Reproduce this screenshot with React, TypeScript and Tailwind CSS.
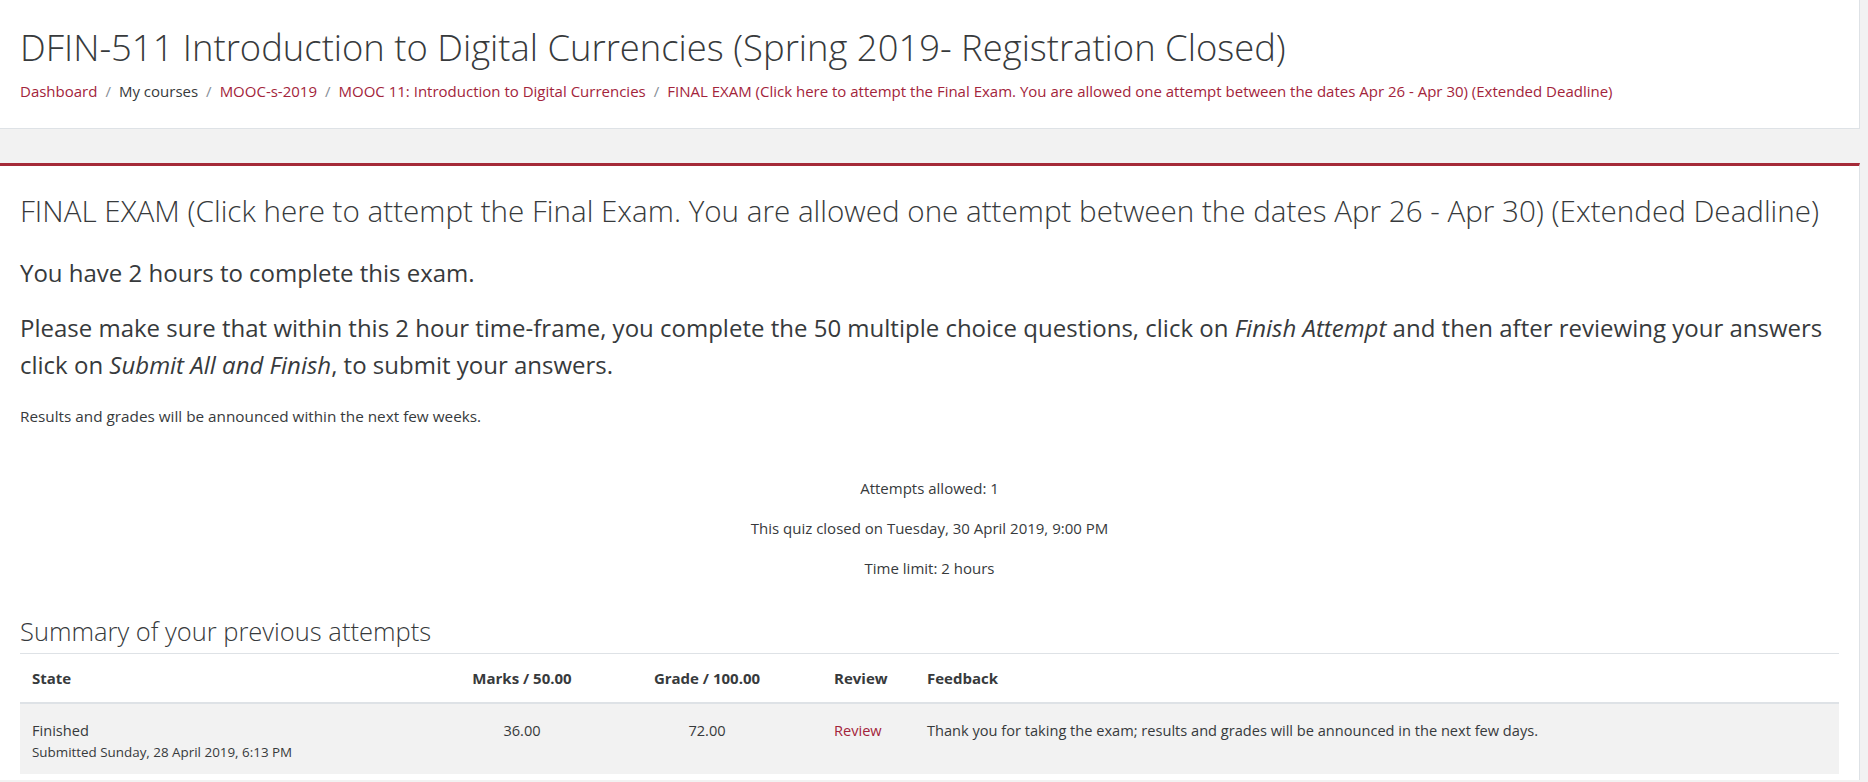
import React from "react";

const crumbs = [
  { label: "Dashboard", link: true },
  { label: "My courses", link: false },
  { label: "MOOC-s-2019", link: true },
  { label: "MOOC 11: Introduction to Digital Currencies", link: true },
  {
    label:
      "FINAL EXAM (Click here to attempt the Final Exam. You are allowed one attempt between the dates Apr 26 - Apr 30) (Extended Deadline)",
    link: true,
  },
];

export default function App() {
  return (
    <div className="min-h-screen bg-[#f2f2f2] font-['Open_Sans',sans-serif] text-[#373a3c]">
      {/* Page header */}
      <div className="w-[1860px] h-[129px] bg-white border-r border-b border-[#dee2e6] px-[20px] pt-[25px]">
        <h1 className="text-[36.4px] font-light leading-[44px] whitespace-nowrap">
          DFIN-511 Introduction to Digital Currencies (Spring 2019- Registration Closed)
        </h1>
        <nav className="mt-[11px] flex items-center text-[15px] leading-[22px] whitespace-nowrap">
          {crumbs.map((c, i) => (
            <React.Fragment key={i}>
              {i > 0 && <span className="px-[8px] text-[#868e96]">/</span>}
              <span className={c.link ? "text-[#a3243b]" : "text-[#373a3c]"}>{c.label}</span>
            </React.Fragment>
          ))}
        </nav>
      </div>

      {/* Main region */}
      <div className="mt-[34px] w-[1860px] bg-white border-t-[3px] border-t-[#a52a38] border-r border-r-[#dee2e6] px-[20px] pt-[28px] pb-[6px]">
        <h2 className="text-[29.6px] font-light leading-[34px] whitespace-nowrap">
          FINAL EXAM (Click here to attempt the Final Exam. You are allowed one attempt between the dates Apr 26 - Apr 30) (Extended Deadline)
        </h2>

        <p className="mt-[29px] text-[24px] leading-[32px] whitespace-nowrap">You have 2 hours to complete this exam.</p>
        <p className="mt-[20px] text-[24px] leading-[37px] whitespace-nowrap">
          Please make sure that within this 2 hour time-frame, you complete the 50 multiple choice questions, click on{" "}
          <em>Finish Attempt</em> and then after reviewing your answers
          <br />
          click on <em>Submit All and Finish</em>, to submit your answers.
        </p>
        <p className="mt-[23px] text-[15.3px] leading-[20px]">Results and grades will be announced within the next few weeks.</p>

        <div className="mt-[52px] flex flex-col items-center gap-[20px] text-[15px] leading-[20px]">
          <p>Attempts allowed: 1</p>
          <p>This quiz closed on Tuesday, 30 April 2019, 9:00 PM</p>
          <p>Time limit: 2 hours</p>
        </div>

        <h3 className="mt-[37px] pb-[6px] border-b border-[#dee2e6] text-[25.5px] font-light leading-[32px]">
          Summary of your previous attempts
        </h3>

        <table className="w-full border-collapse text-[14.6px]">
          <thead>
            <tr className="border-b-2 border-[#dee2e6] text-[15px] font-bold leading-[22px]">
              <th className="w-[432px] px-[12px] py-[13px] text-left">State</th>
              <th className="w-[140px] px-[12px] py-[13px] text-center">Marks / 50.00</th>
              <th className="w-[230px] px-[12px] py-[13px] text-center">Grade / 100.00</th>
              <th className="w-[93px] px-[12px] py-[13px] text-left">Review</th>
              <th className="px-[12px] py-[13px] text-left">Feedback</th>
            </tr>
          </thead>
          <tbody>
            <tr className="bg-[#f2f2f2] align-top">
              <td className="px-[12px] pt-[15px] pb-[13px]">
                <div className="leading-[22px]">Finished</div>
                <div className="mt-[2px] text-[13.4px] leading-[18px]">Submitted Sunday, 28 April 2019, 6:13 PM</div>
              </td>
              <td className="px-[12px] pt-[15px] text-center leading-[22px]">36.00</td>
              <td className="px-[12px] pt-[15px] text-center leading-[22px]">72.00</td>
              <td className="px-[12px] pt-[15px] leading-[22px]">
                <a className="text-[#a3243b]">Review</a>
              </td>
              <td className="px-[12px] pt-[15px] leading-[22px]">
                Thank you for taking the exam; results and grades will be announced in the next few days.
              </td>
            </tr>
          </tbody>
        </table>
      </div>
    </div>
  );
}
